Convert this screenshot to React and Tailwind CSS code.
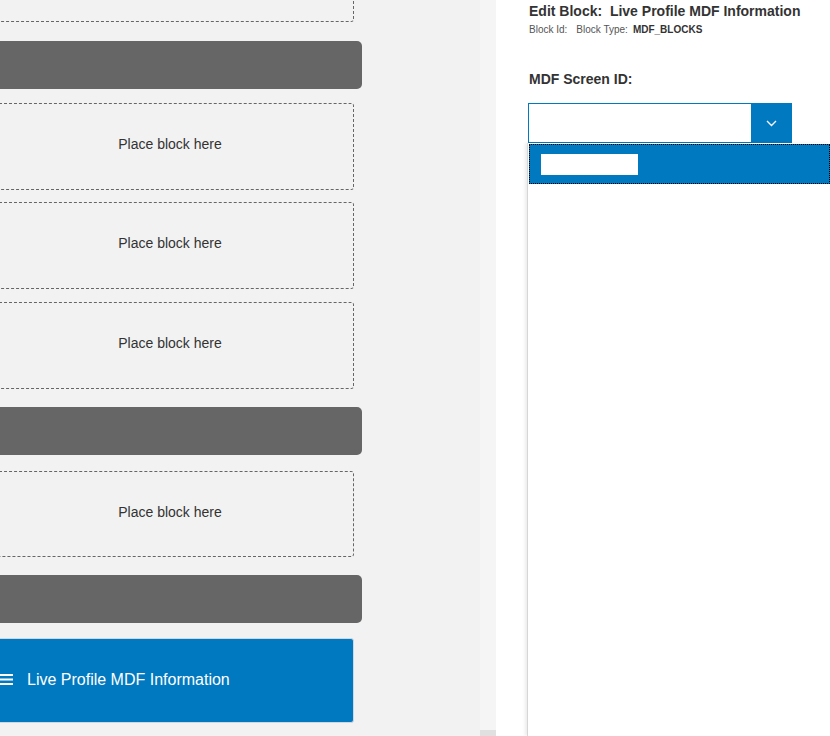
import React from 'react';

const PlaceBox = ({ className = '', label = true }) => (
  <div className={`mx-2 flex items-center justify-center rounded-[3px] border border-dashed border-[#666] pb-1 text-[14px] text-[#333] ${className}`}>
    {label && 'Place block here'}
  </div>
);

const Bar = ({ className = '' }) => (
  <div className={`h-[48px] rounded-[5px] bg-[#666] ${className}`} />
);

export default function App() {
  return (
    <div className="flex h-[736px] w-[830px] overflow-hidden font-['Liberation_Sans',Arial,sans-serif]">
      {/* Canvas with blocks */}
      <div className="w-[480px] shrink-0 overflow-hidden bg-[#f2f2f2]">
        <div className="-ml-[22px] -mt-[65px] flex w-[384px] flex-col">
          <PlaceBox className="h-[87px]" label={false} />
          <Bar className="mt-[19px]" />
          <PlaceBox className="mt-[14px] h-[87px]" />
          <PlaceBox className="mt-[12px] h-[87px]" />
          <PlaceBox className="mt-[13px] h-[87px]" />
          <Bar className="mt-[18px]" />
          <PlaceBox className="mt-[16px] h-[86px]" />
          <Bar className="mt-[18px]" />
          <div className="mx-2 mt-[15px] flex h-[85px] items-center gap-[14px] rounded-[3px] border border-[#d0d8df] bg-[#0079c0] pb-[2px] pl-[13px] text-[16px] text-white">
            <svg width="13" height="11" viewBox="0 0 13 11" fill="#fff">
              <rect x="0" y="0" width="13" height="2" />
              <rect x="0" y="4.5" width="13" height="2" />
              <rect x="0" y="9" width="13" height="2" />
            </svg>
            <span>Live Profile MDF Information</span>
          </div>
        </div>
      </div>

      {/* Scrollbar */}
      <div className="flex w-4 shrink-0 flex-col justify-end bg-[#f5f5f5]">
        <div className="h-[6px] bg-[#e0e0e0]" />
      </div>

      {/* Editor panel */}
      <div className="flex flex-1 flex-col bg-white pl-[31px] pt-[3px] text-[#333]">
        <div className="pl-[2px] text-[14px] font-bold leading-[16px] text-[#333]">
          Edit Block:&nbsp; Live Profile MDF Information
        </div>
        <div className="mt-[5px] flex pl-[2px] text-[10px] leading-[12px] text-[#555]">
          <span>Block Id:</span>
          <span className="ml-[9px]">Block Type:</span>
          <span className="ml-[5px] font-bold text-[#333]">MDF_BLOCKS</span>
        </div>
        <div className="mt-[35px] pl-[2px] text-[14px] font-bold leading-[16px] text-[#333]">
          MDF Screen ID:
        </div>
        <div className="ml-[1px] mt-[16px] flex h-[40px] w-[264px] border border-[#0079c0] bg-white">
          <div className="flex-1" />
          <div className="flex w-[40px] items-center justify-center bg-[#0079c0]">
            <svg width="11" height="7" viewBox="0 0 11 7" fill="none" stroke="#fff" strokeWidth="1.3">
              <path d="M1 1l4.5 4.5L10 1" />
            </svg>
          </div>
        </div>
        <div className="flex flex-1 flex-col border-l border-[#d6d6d6] bg-white shadow-[-2px_0_3px_rgba(0,0,0,0.08)]">
          <div className="ml-[1px] mt-[1px] flex h-[40px] items-center border border-dotted border-black bg-[#0079c0] pl-[11px]">
            <div className="h-[21px] w-[97px] bg-white" />
          </div>
        </div>
      </div>
    </div>
  );
}
